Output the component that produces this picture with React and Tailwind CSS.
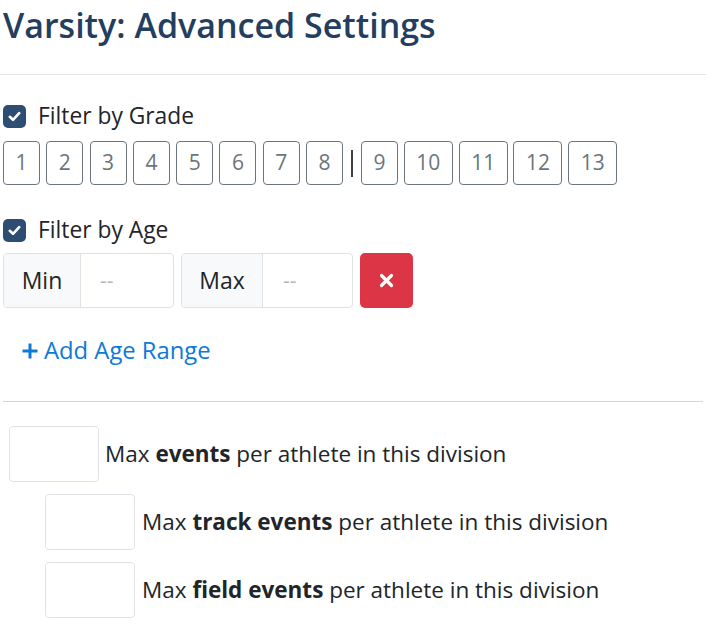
import React from "react";

function Check() {
  return (
    <span className="w-[23px] h-[23px] rounded-[5px] bg-[#2e4d73] flex items-center justify-center shrink-0">
      <svg width="13" height="11" viewBox="0 0 13 11">
        <path d="M1.8 5.8 L5 8.8 L11.2 2.2" fill="none" stroke="white" strokeWidth="2.6" strokeLinecap="round" strokeLinejoin="round" />
      </svg>
    </span>
  );
}

function GradeBtn({ n, wide }) {
  return (
    <div
      className={`${wide ? "w-[49px]" : "w-[37px]"} h-[44px] border border-[#6c757d] rounded-[4px] flex items-center justify-center text-[21px] text-[#6c757d] shrink-0`}
    >
      {n}
    </div>
  );
}

function Row({ indent, bold }) {
  return (
    <div className={`flex items-center ${indent ? "ml-[42px] mt-[12px]" : "ml-[6px] mt-[24px]"}`}>
      <div className="w-[90px] h-[56px] border border-[#dfe3e7] rounded-[4px] bg-white shrink-0" />
      <div className={`${indent ? "ml-[7px]" : "ml-[6px]"} text-[22.5px] text-[#212529]`}>
        Max <span className="font-bold">{bold}</span> per athlete in this division
      </div>
    </div>
  );
}

export default function App() {
  return (
    <div className="w-[706px] h-[626px] bg-white font-['Segoe_UI','Open_Sans',sans-serif] text-[#212529] overflow-hidden">
      <h2 className="h-[74px] pl-[3px] pt-[5px] text-[34px] leading-[40px] font-semibold text-[#243e60]">
        Varsity: Advanced Settings
      </h2>
      <div className="h-px bg-[#e4e4e4]" />
      <div className="px-[3px]">
        <div className="mt-[29px] h-[24px] flex items-center gap-[12px]">
          <Check />
          <span className="text-[22.8px]">Filter by Grade</span>
        </div>
        <div className="mt-[13px] flex items-center">
          <div className="flex gap-[6.3px]">
            {[1, 2, 3, 4, 5, 6, 7, 8].map((n) => (
              <GradeBtn key={n} n={n} />
            ))}
          </div>
          <span className="ml-[8px] mr-[8px] w-[2px] h-[27px] bg-[#3a3f44]" />
          <div className="flex gap-[5.8px]">
            <GradeBtn n={9} />
            {[10, 11, 12, 13].map((n) => (
              <GradeBtn key={n} n={n} wide />
            ))}
          </div>
        </div>
        <div className="mt-[33px] h-[24px] flex items-center gap-[12px]">
          <Check />
          <span className="text-[22.8px]">Filter by Age</span>
        </div>
        <div className="mt-[11px] flex gap-[7px] h-[55px]">
          <div className="flex w-[171px] border border-[#dee2e6] rounded-[4px] overflow-hidden">
            <div className="w-[77px] bg-[#f8f9fa] border-r border-[#dee2e6] flex items-center justify-center text-[23px]">
              Min
            </div>
            <div className="flex-1 flex items-center pl-[19px] text-[21px] text-[#b4b9be]">--</div>
          </div>
          <div className="flex w-[172px] border border-[#dee2e6] rounded-[4px] overflow-hidden">
            <div className="w-[81px] bg-[#f8f9fa] border-r border-[#dee2e6] flex items-center justify-center text-[23px]">
              Max
            </div>
            <div className="flex-1 flex items-center pl-[20px] text-[21px] text-[#b4b9be]">--</div>
          </div>
          <div className="w-[53px] bg-[#dc3545] rounded-[5px] flex items-center justify-center">
            <svg width="15" height="15" viewBox="0 0 15 15">
              <path d="M2.5 2.5 L12.5 12.5 M12.5 2.5 L2.5 12.5" stroke="white" strokeWidth="3.2" strokeLinecap="round" />
            </svg>
          </div>
        </div>
        <div className="mt-[28px] h-[30px] pl-[18px] flex items-center gap-[5px] text-[#0d7ad8] text-[23.8px]">
          <svg width="18" height="18" viewBox="0 0 18 18">
            <path d="M9 1.5 V16.5 M1.5 9 H16.5" stroke="#0d7ad8" strokeWidth="3" />
          </svg>
          <span>Add Age Range</span>
        </div>
        <div className="mt-[35px] h-px bg-[#d6d6d6]" />
        <Row bold="events" />
        <Row indent bold="track events" />
        <Row indent bold="field events" />
      </div>
    </div>
  );
}
